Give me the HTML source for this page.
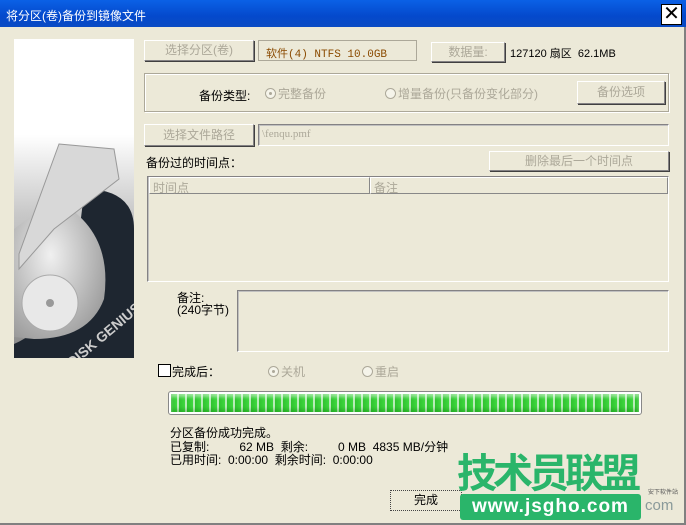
<!DOCTYPE html>
<html><head><meta charset="utf-8"><style>
*{box-sizing:border-box;margin:0;padding:0}
body{width:686px;height:525px;background:#ece9d8;font-family:"Liberation Sans","Noto Sans CJK SC",sans-serif;font-size:12px;color:#000;position:relative;overflow:hidden}
.a{position:absolute;white-space:nowrap}
.btn{position:absolute;background:#ece9d8;border:1px solid;border-color:#fff #848284 #848284 #fff;box-shadow:1px 1px 0 #404040;color:#aca899;text-align:center;font-size:12px}
.fld{position:absolute;border:1px solid;border-color:#848284 #fff #fff #848284;box-shadow:inset 1px 1px 0 #c0c0c0}
.rad{display:inline-block;width:11px;height:11px;border-radius:50%;border:1px solid #aca899;background:#f5f4ea;vertical-align:-1px;margin-right:2px;position:relative}
.rad.on:after{content:"";position:absolute;left:3px;top:3px;width:3px;height:3px;border-radius:50%;background:#aca899}
.g{color:#aca899}
</style></head><body>
<div class="a" style="left:0;top:0;width:686px;height:27px;background:linear-gradient(#0b61e6,#0449cc 60%,#0a4bc4);"></div>
<div class="a" style="left:6px;top:7px;color:#fff;font-size:12px">将分区(卷)备份到镜像文件</div>
<div class="a" style="left:661px;top:4px;width:21px;height:21px;background:#fff;border:1px solid #000;text-align:center;font-size:20px;line-height:19px;color:#000">✕</div>
<div class="a" style="left:0;top:523px;width:686px;height:2px;background:#808080"></div>
<div class="a" style="left:684px;top:27px;width:2px;height:498px;background:#808080"></div>

<svg class="a" style="left:14px;top:39px" width="120" height="319" viewBox="0 0 120 319">
<defs><linearGradient id="bg" x1="0" y1="0" x2="0" y2="1"><stop offset="0" stop-color="#fff"/><stop offset=".3" stop-color="#fff"/><stop offset=".55" stop-color="#c8c8c8"/><stop offset="1" stop-color="#888"/></linearGradient>
<radialGradient id="pl" cx=".4" cy=".4" r=".7"><stop offset="0" stop-color="#f0f0f0"/><stop offset="1" stop-color="#9a9a9a"/></radialGradient></defs>
<rect width="120" height="319" fill="url(#bg)"/>
<path d="M70 150 Q120 150 120 190 L120 319 L0 319 L0 305 Q60 280 70 150Z" fill="#1e2630"/>
<path d="M40 160 Q100 190 90 260 Q75 300 20 300 L0 298 L0 190 Z" fill="url(#pl)"/>
<path d="M45 105 L100 110 L105 140 L40 190 L5 230 L5 215 Z" fill="#d8d8d8" stroke="#999"/>
<circle cx="36" cy="264" r="28" fill="#e8e8e8" stroke="#aaa"/>
<circle cx="36" cy="264" r="4" fill="#999"/>
<text x="36" y="312" transform="rotate(-40 70 290)" fill="#ccc" font-weight="bold" font-size="14" font-family="Liberation Sans">DISK GENIUS</text>
</svg>

<div class="btn" style="left:144px;top:40px;width:110px;height:21px;line-height:19px">选择分区(卷)</div>
<div class="fld" style="left:258px;top:40px;width:159px;height:21px;box-shadow:none;border-color:#aca899"><span class="a" style="left:7px;top:4px;color:#8a4a00;font-size:11px;font-family:'Liberation Mono','Noto Sans CJK SC',monospace">软件(4) NTFS 10.0GB</span></div>
<div class="btn" style="left:431px;top:42px;width:74px;height:20px;line-height:18px">数据量:</div>
<div class="a" style="left:510px;top:45px;font-size:11px">127120 扇区 &nbsp;62.1MB</div>

<div class="a" style="left:144px;top:73px;width:525px;height:39px;border:1px solid #aca899;box-shadow:inset 1px 1px 0 #fff,1px 1px 0 #fff"></div>
<div class="a" style="left:199px;top:87px">备份类型:</div>
<div class="a g" style="left:265px;top:85px"><span class="rad on"></span>完整备份</div>
<div class="a g" style="left:385px;top:85px"><span class="rad"></span>增量备份(只备份变化部分)</div>
<div class="btn" style="left:577px;top:81px;width:88px;height:23px;line-height:21px">备份选项</div>

<div class="btn" style="left:144px;top:124px;width:110px;height:22px;line-height:20px">选择文件路径</div>
<div class="fld" style="left:258px;top:124px;width:411px;height:22px"><span class="a g" style="left:3px;top:3px;font-size:11px;font-family:'Liberation Serif',serif">\fenqu.pmf</span></div>

<div class="a" style="left:146px;top:154px">备份过的时间点：</div>
<div class="btn" style="left:489px;top:151px;width:180px;height:20px;line-height:18px">删除最后一个时间点</div>

<div class="fld" style="left:147px;top:176px;width:522px;height:106px"></div>
<div class="a" style="left:149px;top:177px;width:221px;height:17px;border:1px solid;border-color:#fff #888 #888 #fff"><span class="a g" style="left:3px;top:1px">时间点</span></div>
<div class="a" style="left:370px;top:177px;width:298px;height:17px;border:1px solid;border-color:#fff #888 #888 #fff"><span class="a g" style="left:3px;top:1px">备注</span></div>

<div class="a" style="left:177px;top:292px;line-height:12px">备注:<br>(240字节)</div>
<div class="fld" style="left:237px;top:290px;width:432px;height:62px"></div>

<div class="a" style="left:158px;top:364px;width:13px;height:13px;border:1px solid #000;background:#fff"></div>
<div class="a" style="left:172px;top:363px">完成后：</div>
<div class="a g" style="left:268px;top:363px"><span class="rad on"></span>关机</div>
<div class="a g" style="left:362px;top:363px"><span class="rad"></span>重启</div>

<div class="a" style="left:168px;top:391px;width:474px;height:24px;border:1px solid #888;border-radius:3px;background:#fff;padding:2px">
<div style="width:100%;height:100%;background:repeating-linear-gradient(90deg,#2fc22f 0,#3fd83f 6px,#b8ecb8 6px,#b8ecb8 8px);box-shadow:inset 0 3px 3px rgba(255,255,255,.5),inset 0 -3px 3px rgba(0,100,0,.25)"></div></div>

<div class="a" style="left:170px;top:424px">分区备份成功完成。</div>
<div class="a" style="left:170px;top:441px;line-height:13px">已复制: &nbsp;&nbsp;&nbsp;&nbsp;&nbsp;&nbsp;&nbsp;&nbsp;62 MB &nbsp;剩余: &nbsp;&nbsp;&nbsp;&nbsp;&nbsp;&nbsp;&nbsp;&nbsp;0 MB &nbsp;4835 MB/分钟<br>已用时间: &nbsp;0:00:00 &nbsp;剩余时间: &nbsp;0:00:00</div>

<div class="btn" style="left:390px;top:490px;width:72px;height:21px;line-height:19px;color:#000;border:1px dotted #444;box-shadow:none">完成</div>

<div class="a" style="left:457px;top:452px;font-size:40px;font-weight:bold;color:#2ab56a;letter-spacing:-4px;line-height:44px">技术员联盟</div>
<div class="a" style="left:460px;top:494px;width:181px;height:26px;background:#2ab56a;border-radius:3px;color:#fff;font-size:19px;font-weight:bold;text-align:center;line-height:26px;letter-spacing:1px">www.jsgho.com</div>
<div class="a" style="left:645px;top:497px;font-size:15px;color:#8a9a9a">com</div>
<div class="a" style="left:648px;top:487px;font-size:6px;color:#555">安下软件站</div>
</body></html>
